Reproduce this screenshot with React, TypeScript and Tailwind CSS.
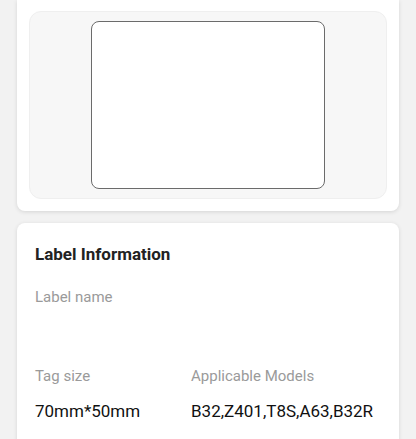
const App = () => {
  return (
    <div className="min-h-screen bg-[#f2f2f2] px-[17px] pb-6 font-['Roboto',sans-serif]">
      <div className="rounded-b-lg bg-white px-3 pt-[11px] pb-3 shadow-[0_1px_4px_rgba(0,0,0,0.12)]">
        <div className="flex h-[188px] justify-center rounded-xl border border-[#efefef] bg-[#f7f7f7] pt-[9px]">
          <div className="h-[168px] w-[234px] rounded-lg border border-[#6b6b6b] bg-white" />
        </div>
      </div>

      <div className="mt-3 rounded-lg bg-white px-[18px] pt-[19px] pb-8 shadow-[0_1px_4px_rgba(0,0,0,0.12)]">
        <h2 className="text-[17px] font-bold leading-6 text-[#222]">Label Information</h2>
        <div className="mt-[21px] text-[15px] leading-5 text-[#9a9a9a]">Label name</div>
        <div className="mt-[59px] grid grid-cols-[156px_1fr]">
          <div className="text-[15px] leading-5 text-[#9a9a9a]">Tag size</div>
          <div className="text-[15px] leading-5 text-[#9a9a9a]">Applicable Models</div>
          <div className="mt-[13px] text-[17px] leading-6 text-[#111]">70mm*50mm</div>
          <div className="mt-[13px] text-[17px] leading-6 text-[#111]">B32,Z401,T8S,A63,B32R</div>
        </div>
      </div>
    </div>
  );
};

export default App;
